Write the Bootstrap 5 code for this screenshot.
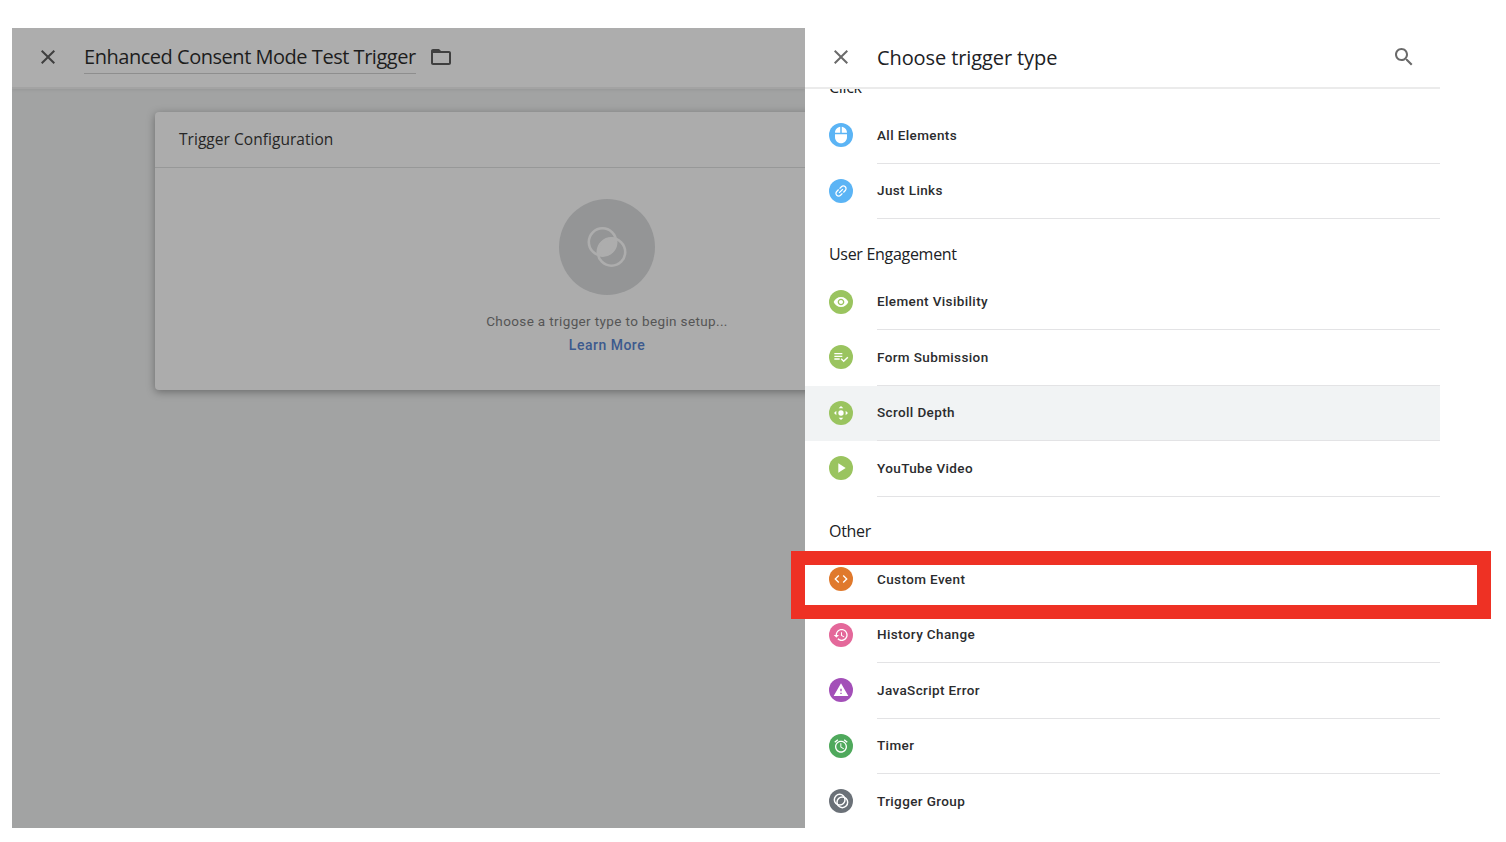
<!DOCTYPE html>
<html lang="en">
<head>
    <meta charset="UTF-8">
    <title>Choose trigger type</title>
    <link href="https://cdn.jsdelivr.net/npm/bootstrap@5.3.3/dist/css/bootstrap.min.css" rel="stylesheet">
    <style>
        html, body { height: 100%; overflow: hidden; background: #fff; }
        body { font-family: Roboto, "Liberation Sans", sans-serif; position: relative; }
        .app-frame { width: 1428px; height: 800px; margin: 28px 0 0 12px; }
        .left-pane { width: 793px; background: #a2a3a3; }
        .left-head { height: 61px; background: #adadad; border-bottom: 2px solid #a3a3a3; box-shadow: 0 1px 3px rgba(0,0,0,.08); padding: 0 0 1px 24px; }
        .left-head svg { fill: #3f3f3f; }
        .tag-title { font-family: "Open Sans", sans-serif; font-size: 20px; letter-spacing: -.47px; color: #1d1d1d; margin-left: 24px; margin-right: 13px; height: 31px; line-height: 28px; border-bottom: 1px solid #8e8e8e; margin-top: 3px; white-space: nowrap; }
        .left-body { padding: 23px 0 0 143px; }
        .cfg-box { width: 904px; height: 278px; flex-shrink: 0; background: #acacac; border-radius: 4px; box-shadow: 0 2px 8px rgba(0,0,0,.35); }
        .cfg-head { height: 56px; padding-left: 24px; font-family: "Open Sans", sans-serif; font-size: 15.5px; letter-spacing: .04px; line-height: 55px; color: #262626; border-bottom: 1px solid #979898; }
        .cfg-disc { width: 96px; height: 96px; border-radius: 50%; background: #949596; margin-top: 31px; }
        .cfg-text { font-size: 13.5px; letter-spacing: .37px; color: #555; margin-top: 16px; line-height: 20px; }
        .cfg-link { font-size: 14px; font-weight: 500; letter-spacing: .5px; color: #3c5a8e; margin-top: 4px; line-height: 20px; text-decoration: none; }
        .right-pane { width: 635px; background: #fff; }
        .right-head { height: 61px; background: #fff; border-bottom: 2px solid #ebebeb; padding: 0 24px 1px; z-index: 2; position: relative; }
        .right-head svg { fill: #6a6a6a; }
        .right-title { font-family: "Open Sans", sans-serif; font-size: 20px; letter-spacing: -.1px; color: #202124; margin-left: 24px; padding-top: 2px; }
        .type-list { margin-top: -36.5px; }
        .group-label { height: 55.5px; padding: 23.5px 0 0 24px; font-family: "Open Sans", sans-serif; font-size: 16px; letter-spacing: -.3px; line-height: 22px; color: #202124; }
        .type-row { height: 55.5px; padding-left: 24px; }
        .type-icon { width: 24px; height: 24px; border-radius: 50%; flex-shrink: 0; margin-top: 15px; }
        .type-icon svg { width: 16px; height: 16px; fill: #fff; }
        .type-icon svg.ic-lg { width: 18px; height: 18px; }
        .type-icon svg.ic-rings { fill: none; }
        .type-label { flex: 1; margin-left: 24px; padding-top: 16.5px; font-size: 13.5px; font-weight: 500; letter-spacing: .38px; line-height: 20px; color: #2b2c2e; border-bottom: 1px solid #e3e3e5; }
        .type-row.hovered { background: #f1f3f4; }
        .ic-blue { background: #5bb4f5; }
        .ic-green { background: #9ac45f; }
        .ic-orange { background: #e0792c; }
        .ic-pink { background: #e4689a; }
        .ic-purple { background: #a34fb8; }
        .ic-dkgreen { background: #4fa95c; }
        .ic-grey { background: #6b7178; }
        .red-callout { position: absolute; left: 791px; top: 551px; width: 700px; height: 68px; border: 14px solid #ee3124; }
    </style>
</head>
<body>
<div class="app-frame d-flex overflow-hidden">
    <div class="left-pane d-flex flex-column overflow-hidden">
        <div class="left-head d-flex align-items-center flex-shrink-0">
            <svg width="24" height="24" viewBox="0 0 24 24"><path d="M19 6.41L17.59 5 12 10.59 6.41 5 5 6.41 10.59 12 5 17.59 6.41 19 12 13.41 17.59 19 19 17.59 13.41 12 19 6.41z"/></svg>
            <div class="tag-title">Enhanced Consent Mode Test Trigger</div>
            <svg width="24" height="24" viewBox="0 0 24 24"><path d="M20 6h-8l-2-2H4c-1.1 0-1.99.9-1.99 2L2 18c0 1.1.9 2 2 2h16c1.1 0 2-.9 2-2V8c0-1.1-.9-2-2-2zm0 12H4V8h16v10z"/></svg>
        </div>
        <div class="left-body d-flex">
            <div class="cfg-box">
                <div class="cfg-head">Trigger Configuration</div>
                <div class="d-flex flex-column align-items-center">
                    <div class="cfg-disc d-flex align-items-center justify-content-center">
                        <svg width="48" height="48" viewBox="0 0 48 48" fill="none" stroke="#adadad" stroke-width="2.6">
                            <clipPath id="lensclip"><circle cx="19.5" cy="19" r="14.5"/></clipPath>
                            <circle cx="28.5" cy="29" r="14.5" fill="#adadad" stroke="none" clip-path="url(#lensclip)"/>
                            <circle cx="19.5" cy="19" r="13.7"/>
                            <circle cx="28.5" cy="29" r="13.7"/>
                        </svg>
                    </div>
                    <div class="cfg-text">Choose a trigger type to begin setup...</div>
                    <a class="cfg-link" href="#">Learn More</a>
                </div>
            </div>
        </div>
    </div>
    <div class="right-pane d-flex flex-column overflow-hidden">
        <div class="right-head d-flex align-items-center flex-shrink-0">
            <svg width="24" height="24" viewBox="0 0 24 24"><path d="M19 6.41L17.59 5 12 10.59 6.41 5 5 6.41 10.59 12 5 17.59 6.41 19 12 13.41 17.59 19 19 17.59 13.41 12 19 6.41z"/></svg>
            <div class="right-title flex-grow-1">Choose trigger type</div>
            <svg width="24" height="24" viewBox="0 0 24 24"><path d="M15.5 14h-.79l-.28-.27C15.41 12.59 16 11.11 16 9.5 16 5.91 13.09 3 9.5 3S3 5.91 3 9.5 5.91 16 9.5 16c1.61 0 3.09-.59 4.23-1.57l.27.28v.79l5 4.99L20.49 19l-4.99-5zm-6 0C7.01 14 5 11.99 5 9.5S7.01 5 9.5 5 14 7.01 14 9.5 11.99 14 9.5 14z"/></svg>
        </div>
        <div class="type-list">
            <div class="group-label">Click</div>
            <div class="type-row d-flex">
                <span class="type-icon ic-blue d-flex align-items-center justify-content-center"><svg class="ic-lg" viewBox="0 0 24 24"><path d="M13 1.07V9h7c0-4.08-3.05-7.44-7-7.93zM4 15c0 4.42 3.58 8 8 8s8-3.58 8-8v-4H4v4zm7-13.93C7.05 1.56 4 4.92 4 9h7V1.07z"/></svg></span>
                <div class="type-label">All Elements</div>
            </div>
            <div class="type-row d-flex">
                <span class="type-icon ic-blue d-flex align-items-center justify-content-center"><svg viewBox="0 0 24 24"><path transform="rotate(-45 12 12)" d="M3.9 12c0-1.71 1.39-3.1 3.1-3.1h4V7H7c-2.76 0-5 2.24-5 5s2.24 5 5 5h4v-1.9H7c-1.71 0-3.1-1.39-3.1-3.1zM8 13h8v-2H8v2zm9-6h-4v1.9h4c1.71 0 3.1 1.39 3.1 3.1s-1.39 3.1-3.1 3.1h-4V17h4c2.76 0 5-2.24 5-5s-2.24-5-5-5z"/></svg></span>
                <div class="type-label">Just Links</div>
            </div>
            <div class="group-label">User Engagement</div>
            <div class="type-row d-flex">
                <span class="type-icon ic-green d-flex align-items-center justify-content-center"><svg viewBox="0 0 24 24"><path d="M12 4.5C7 4.5 2.73 7.61 1 12c1.73 4.39 6 7.5 11 7.5s9.27-3.11 11-7.5c-1.73-4.39-6-7.5-11-7.5zM12 17c-2.76 0-5-2.24-5-5s2.24-5 5-5 5 2.24 5 5-2.24 5-5 5zm0-8c-1.66 0-3 1.34-3 3s1.34 3 3 3 3-1.34 3-3-1.34-3-3-3z"/></svg></span>
                <div class="type-label">Element Visibility</div>
            </div>
            <div class="type-row d-flex">
                <span class="type-icon ic-green d-flex align-items-center justify-content-center"><svg viewBox="0 0 24 24"><path d="M14 10H2v2h12v-2zm0-4H2v2h12V6zM2 16h8v-2H2v2zm19.5-4.5L23 13l-6.99 7-4.51-4.5L13 14l3.01 3 5.49-5.5z"/></svg></span>
                <div class="type-label">Form Submission</div>
            </div>
            <div class="type-row hovered d-flex">
                <span class="type-icon ic-green d-flex align-items-center justify-content-center"><svg viewBox="0 0 24 24"><path d="M12 1.5l3.5 3.5h-7zM12 22.5L8.5 19h7zM1.5 12L5 8.5v7zM22.5 12L19 15.5v-7z"/><circle cx="12" cy="12" r="4"/></svg></span>
                <div class="type-label">Scroll Depth</div>
            </div>
            <div class="type-row d-flex">
                <span class="type-icon ic-green d-flex align-items-center justify-content-center"><svg viewBox="0 0 24 24"><path d="M8 5v14l11-7z"/></svg></span>
                <div class="type-label">YouTube Video</div>
            </div>
            <div class="group-label">Other</div>
            <div class="type-row d-flex">
                <span class="type-icon ic-orange d-flex align-items-center justify-content-center"><svg viewBox="0 0 24 24"><path d="M9.4 16.6L4.8 12l4.6-4.6L8 6l-6 6 6 6 1.4-1.4zm5.2 0l4.6-4.6-4.6-4.6L16 6l6 6-6 6-1.4-1.4z"/></svg></span>
                <div class="type-label">Custom Event</div>
            </div>
            <div class="type-row d-flex">
                <span class="type-icon ic-pink d-flex align-items-center justify-content-center"><svg viewBox="0 0 24 24"><path d="M13 3c-4.97 0-9 4.03-9 9H1l3.89 3.89.07.14L9 12H6c0-3.87 3.13-7 7-7s7 3.13 7 7-3.13 7-7 7c-1.93 0-3.68-.79-4.94-2.06l-1.42 1.42C8.27 19.99 10.51 21 13 21c4.97 0 9-4.03 9-9s-4.03-9-9-9zm-1 5v5l4.28 2.54.72-1.21-3.5-2.08V8H12z"/></svg></span>
                <div class="type-label">History Change</div>
            </div>
            <div class="type-row d-flex">
                <span class="type-icon ic-purple d-flex align-items-center justify-content-center"><svg viewBox="0 0 24 24"><path d="M1 21h22L12 2 1 21zm12-3h-2v-2h2v2zm0-4h-2v-4h2v4z"/></svg></span>
                <div class="type-label">JavaScript Error</div>
            </div>
            <div class="type-row d-flex">
                <span class="type-icon ic-dkgreen d-flex align-items-center justify-content-center"><svg viewBox="0 0 24 24"><path d="M22 5.72l-4.6-3.86-1.29 1.53 4.6 3.86L22 5.72zM7.88 3.39L6.6 1.86 2 5.71l1.29 1.53 4.59-3.85zM12.5 8H11v6l4.75 2.85.75-1.23-4-2.37V8zM12 4c-4.97 0-9 4.03-9 9s4.02 9 9 9c4.97 0 9-4.03 9-9s-4.03-9-9-9zm0 16c-3.87 0-7-3.13-7-7s3.13-7 7-7 7 3.13 7 7-3.13 7-7 7z"/></svg></span>
                <div class="type-label">Timer</div>
            </div>
            <div class="type-row d-flex">
                <span class="type-icon ic-grey d-flex align-items-center justify-content-center"><svg class="ic-rings" viewBox="0 0 24 24" stroke="#fff" stroke-width="2.2"><circle cx="10" cy="10" r="8"/><circle cx="14" cy="14" r="8"/></svg></span>
                <div class="type-label">Trigger Group</div>
            </div>
        </div>
    </div>
</div>
<div class="red-callout"></div>
</body>
</html>
